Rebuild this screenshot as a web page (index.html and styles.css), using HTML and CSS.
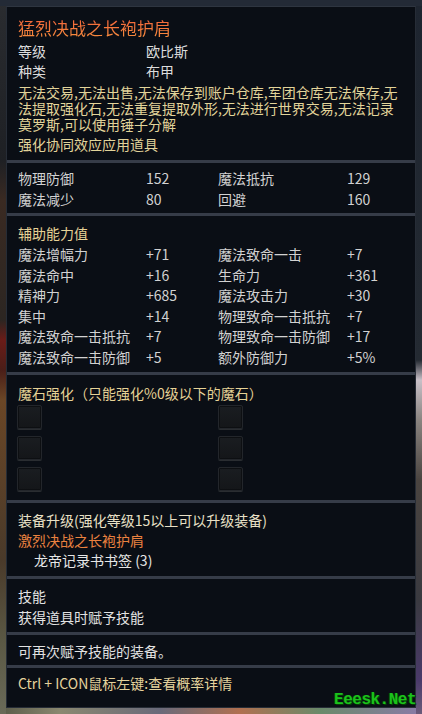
FILE: index.html
```html
<!DOCTYPE html>
<html lang="zh-CN">
<head>
<meta charset="utf-8">
<title>猛烈决战之长袍护肩</title>
<link rel="stylesheet" href="styles.css">
</head>
<body>
<div class="scene">
  <div class="tip">
    <section class="sec s1">
      <div class="title">猛烈决战之长袍护肩</div>
      <div class="kv"><span>等级</span><span>欧比斯</span></div>
      <div class="kv"><span>种类</span><span>布甲</span></div>
      <p class="desc">无法交易,无法出售,无法保存到账户仓库,军团仓库无法保存,无法提取强化石,无法重复提取外形,无法进行世界交易,无法记录莫罗斯,可以使用锤子分解</p>
      <div class="note">强化协同效应应用道具</div>
    </section>

    <section class="sec s2">
      <div class="grid4 rows21">
        <span>物理防御</span><span>152</span><span>魔法抵抗</span><span>129</span>
        <span>魔法减少</span><span>80</span><span>回避</span><span>160</span>
      </div>
    </section>

    <section class="sec s3">
      <div class="head">辅助能力值</div>
      <div class="grid4 rows20">
        <span>魔法增幅力</span><span>+71</span><span>魔法致命一击</span><span>+7</span>
        <span>魔法命中</span><span>+16</span><span>生命力</span><span>+361</span>
        <span>精神力</span><span>+685</span><span>魔法攻击力</span><span>+30</span>
        <span>集中</span><span>+14</span><span>物理致命一击抵抗</span><span>+7</span>
        <span>魔法致命一击抵抗</span><span>+7</span><span>物理致命一击防御</span><span>+17</span>
        <span>魔法致命一击防御</span><span>+5</span><span>额外防御力</span><span>+5%</span>
      </div>
    </section>

    <section class="sec s4">
      <div class="head">魔石强化（只能强化%0级以下的魔石）</div>
      <div class="slots">
        <i class="slot"></i><i class="slot"></i>
        <i class="slot"></i><i class="slot"></i>
        <i class="slot"></i><i class="slot"></i>
      </div>
    </section>

    <section class="sec s5">
      <div class="line warm">装备升级(强化等级15以上可以升级装备)</div>
      <div class="line orange">激烈决战之长袍护肩</div>
      <div class="line mat">龙帝记录书书签 (3)</div>
    </section>

    <section class="sec s6">
      <div class="line2">技能</div>
      <div class="line2">获得道具时赋予技能</div>
    </section>

    <section class="sec s7">
      <div class="line">可再次赋予技能的装备。</div>
    </section>

    <section class="sec s8">
      <div class="line yellow">Ctrl + ICON鼠标左键:查看概率详情</div>
    </section>
  </div>
  <div class="wm">Eeesk.Net</div>
</div>
</body>
</html>
```
FILE: styles.css
```css
* { box-sizing: border-box; }

html, body {
  margin: 0;
  padding: 0;
}

body {
  width: 422px;
  height: 714px;
  overflow: hidden;
  font-family: "Noto Sans CJK SC", "Noto Sans", sans-serif;
  font-size: 14px;
  background-color: #1f2530;
  background-image:
    linear-gradient(180deg, #232a36 0, #232a36 6px, transparent 6px),
    linear-gradient(180deg, #2a2c30 0, #1e2024 160px, #3a2a22 200px, #2c2622 320px, #6a1c18 340px, #4a1e18 370px, #6a4626 400px, #4a3a2a 560px, #5a5844 640px, #6a6a58 714px),
    linear-gradient(180deg, #1e2530 0, #242a32 360px, #c8c0c8 380px, #8a8480 420px, #4a4440 480px, #3a3a40 600px, #4a3a6a 680px, #6a5a7a 714px),
    linear-gradient(90deg, #5a5a48 0, #8a8870 60px, #6a6a7a 160px, #b07050 240px, #6a8a6a 320px, #8a7aa8 422px);
  background-repeat: no-repeat;
  background-size: 422px 6px, 6px 714px, 6px 714px, 422px 6px;
  background-position: 0 0, 0 0, 416px 0, 0 708px;
}

.scene {
  position: relative;
  width: 422px;
  height: 714px;
  padding: 6px 6px 0 6px;
}

.tip {
  width: 410px;
  background: #0a0e15;
  border: 1px solid #262c36;
  border-top-color: #2e3540;
}

.sec {
  padding: 0 13px 0 11px;
  border-top: 3px solid #363c48;
}

.s1 { border-top: 0; padding-top: 9px; padding-bottom: 6px; }
.s2 { padding-top: 5px; padding-bottom: 3px; }
.s3 { padding-top: 6px; padding-bottom: 5px; }
.s4 { padding-top: 8px; padding-bottom: 9px; }
.s5 { padding-top: 7px; padding-bottom: 5px; }
.s6 { padding-top: 7px; padding-bottom: 4px; }
.s7 { padding-top: 6px; padding-bottom: 4px; }
.s8 { padding-top: 5px; padding-bottom: 14px; }

.title {
  font-size: 17px;
  line-height: 24px;
  color: #f27a3c;
  background: linear-gradient(180deg, #f4603a 0%, #f7903e 100%);
  -webkit-background-clip: text;
  background-clip: text;
  -webkit-text-fill-color: transparent;
  margin-bottom: 1px;
}

.kv {
  display: grid;
  grid-template-columns: 128px 1fr;
  line-height: 20px;
  color: #dcdcdc;
}

.desc {
  margin: 3px 0 0;
  line-height: 16px;
  color: #e2d49a;
}

.note {
  margin-top: 2px;
  line-height: 20px;
  color: #e2d49a;
}

.grid4 {
  display: grid;
  grid-template-columns: 128px 72px 129px 1fr;
  color: #d2d2d2;
  white-space: nowrap;
}

.rows21 { grid-auto-rows: 21px; line-height: 21px; }
.rows20 { grid-auto-rows: 20.5px; line-height: 20.5px; }

.head {
  line-height: 22px;
  color: #e6d296;
}

.s4 .head { line-height: 20px; }

.slots {
  display: grid;
  grid-template-columns: 201px 24px;
  grid-auto-rows: 24px;
  row-gap: 7px;
  margin: 2px 0 0 -1px;
}

.slot {
  display: block;
  width: 25px;
  height: 24px;
  border: 1px solid #23262b;
  border-radius: 2px;
  background: linear-gradient(180deg, #1a1d21 0%, #141619 100%);
  box-shadow: inset 0 0 0 1px #0d0f12, 0 1px 0 #2a2d31;
}

.line { line-height: 20px; color: #e2e2e2; }
.line2 { line-height: 21px; color: #e2e2e2; }
.line.mat { line-height: 21px; padding-left: 16px; color: #e6e6e6; }
.warm { color: #e8e0c6; }
.orange { color: #ea8240; }
.yellow { color: #e4d29c; }

.wm {
  position: absolute;
  right: 6px;
  bottom: 5px;
  font-family: "Liberation Mono", monospace;
  font-weight: bold;
  font-size: 16px;
  line-height: 18px;
  color: #1cc21c;
  text-shadow: 1px 1px 0 #064006, -1px 0 0 #064006;
  letter-spacing: -0.5px;
}
```
